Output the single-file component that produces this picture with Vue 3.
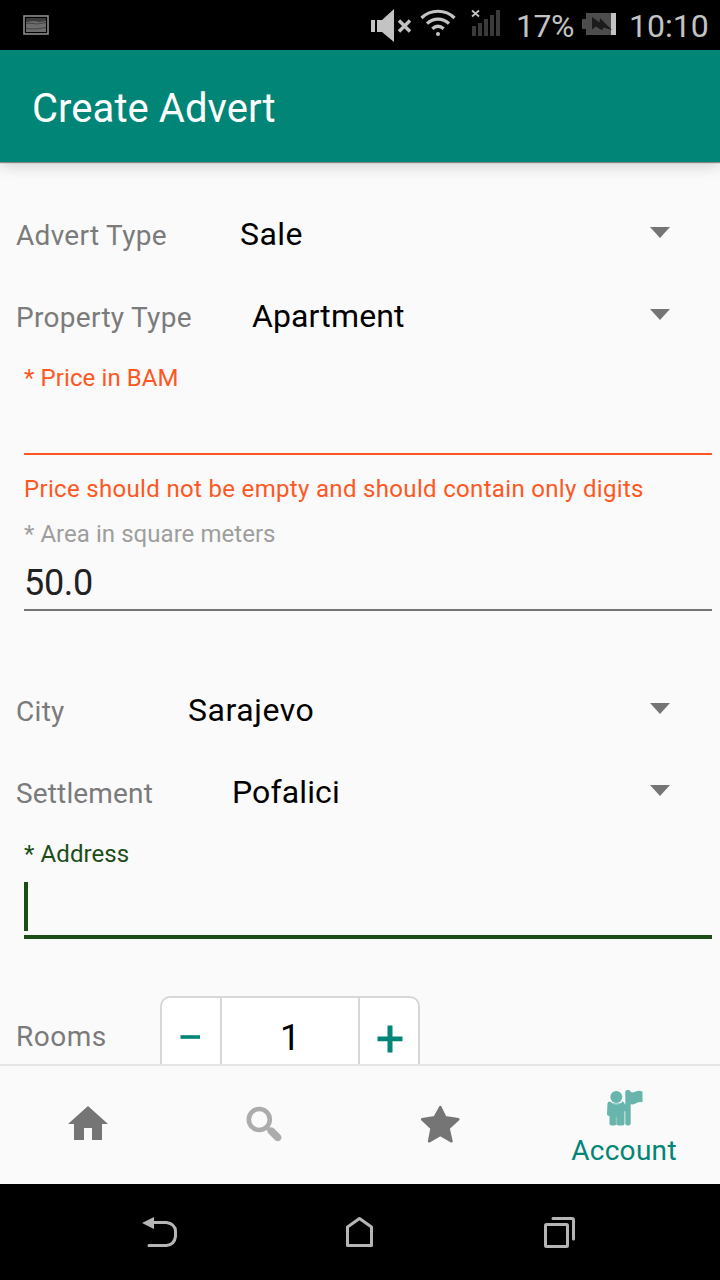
<script setup>
const placeRows = [
  { label: 'Advert Type', value: 'Sale', gap: 'g-sale' },
  { label: 'Property Type', value: 'Apartment', gap: 'g-apartment' },
]
const cityRows = [
  { label: 'City', value: 'Sarajevo', gap: 'g-city' },
  { label: 'Settlement', value: 'Pofalici', gap: 'g-settlement' },
]
</script>

<template>
  <div class="screen">
    <div class="status">
      <svg class="picture" width="26" height="20" viewBox="0 0 26 20">
        <rect x="1" y="1" width="24" height="18" fill="none" stroke="#8d8d8d" stroke-width="1.600" />
        <rect x="3" y="3" width="20" height="14" fill="#6c6c6c" />
        <path d="M3 3h20v3l-7 1-5-1-8 1z" fill="#3c3c3c" />
        <path d="M3 8l7 .500 4 .500 9-1.500M3 13.500l8 .500 6-.500 6-1" fill="none" stroke="#444" />
      </svg>
      <svg class="signals" width="132" height="36" viewBox="370 8 132 36">
        <path d="M371 20h4v12h-4zM377 20h5l12-11v33l-12-10h-5z" fill="#c3c3c3" />
        <path d="M399 20.500l11 11M410 20.500l-11 11" stroke="#c3c3c3" stroke-width="3.400" fill="none" />
        <g fill="none" stroke="#c3c3c3" stroke-width="3.200">
          <path d="M421.500 18c9-9 24-9 33 0" />
          <path d="M427 23.700c6.500-6.200 15.500-6.200 22 0" />
          <path d="M432.300 28.800c3.700-3.300 7.700-3.300 11.400 0" />
        </g>
        <circle cx="438" cy="34" r="2" fill="#c3c3c3" />
        <path d="M472 10.500l7 6M479 10.500l-7 6" stroke="#c3c3c3" stroke-width="1.800" />
        <path d="M472 26h4v10h-4zM478 23h4v13h-4zM484 19h4v17h-4zM490 15h4v21h-4zM496 10h4v26h-4z" fill="#3a3a3a" />
      </svg>
      <span class="percent">17%</span>
      <svg class="battery" width="34" height="22" viewBox="0 0 34 22">
        <path d="M0 6h4V0h25v22H4v-6H0z" fill="#4d4d4d" />
        <path d="M29 0h5v22h-5z" fill="#c3c3c3" />
        <path d="M10 4l7.500 5.500L18 5l12 12-9-2.500-.500 3-6.500-4-4 3z" fill="#1b1b1b" />
      </svg>
      <span class="clock">10:10</span>
    </div>

    <header class="appbar"><h1>Create Advert</h1></header>

    <main class="form">
      <div v-for="row in placeRows" :key="row.label" class="row" :class="row.gap">
        <span class="label">{{ row.label }}</span>
        <span class="value">{{ row.value }}</span>
        <svg class="arrow" width="20" height="11" viewBox="0 0 20 11"><path d="M0 0h20L10 11z" fill="#757575" /></svg>
      </div>

      <div class="field price">
        <span class="hint price-hint">* Price in BAM</span>
        <div class="input"></div>
      </div>
      <span class="error">Price should not be empty and should contain only digits</span>

      <div class="field area">
        <span class="hint area-hint">* Area in square meters</span>
        <div class="input"><span class="number">50.0</span></div>
      </div>

      <div v-for="row in cityRows" :key="row.label" class="row" :class="row.gap">
        <span class="label">{{ row.label }}</span>
        <span class="value">{{ row.value }}</span>
        <svg class="arrow" width="20" height="11" viewBox="0 0 20 11"><path d="M0 0h20L10 11z" fill="#757575" /></svg>
      </div>

      <div class="field address">
        <span class="hint address-hint">* Address</span>
        <div class="input"><i class="caret"></i></div>
      </div>

      <div class="rooms">
        <span class="label">Rooms</span>
        <div class="stepper">
          <div class="step minus">
            <svg width="20" height="4" viewBox="0 0 20 4"><path d="M.500 .200h19.500v3.600H.500z" fill="#018577" /></svg>
          </div>
          <div class="count">1</div>
          <div class="step plus">
            <svg width="26" height="28" viewBox="0 0 26 28"><path d="M.500 11.500h10V.500h5v11h10v4.800h-10V27.500h-5V16.300H.500z" fill="#018577" /></svg>
          </div>
        </div>
      </div>
    </main>

    <nav class="tabs">
      <div class="tab">
        <svg width="40" height="40" viewBox="68 1104 40 40"><path d="M88 1106l20 18h-6v16H92v-12h-8v12H74v-16h-6z" fill="#757575" /></svg>
      </div>
      <div class="tab">
        <svg width="40" height="40" viewBox="244 1104 40 40">
          <circle cx="259.300" cy="1119.500" r="10.500" fill="none" stroke="#acacac" stroke-width="4.600" />
          <path d="M267 1130q0-2 3-2.800 3 0 4 1.200l6.500 6.500q2 2.500 0 5-2.500 2.200-5 0.500l-7-7q-1.500-1.500-1.500-3.400z" fill="#acacac" />
          <path d="M265.500 1125.500l4 4" stroke="#acacac" stroke-width="2.500" />
        </svg>
      </div>
      <div class="tab">
        <svg width="40" height="40" viewBox="420 1104 40 40">
          <path d="M440.300 1107l5 10.300 13 2-9.800 9 3 13-11.200-6.300-11.200 6.300 2.500-13-9.500-9 12.500-2z" fill="#757575" stroke="#757575" stroke-width="2.500" stroke-linejoin="round" />
        </svg>
      </div>
      <div class="tab active">
        <svg width="40" height="40" viewBox="604 1088 40 40">
          <g fill="#67b5ac">
            <circle cx="616.300" cy="1097" r="6" />
            <path d="M610 1101.500q2 1.500 3.500 2h6q2-.500 3.500-2 2.500 3.500 3 8l-1.500 2v12q0 2-2 2h-4l-2-1-2 1h-3q-2 0-2-2v-7.500q-2.500 0-2.500-2.500l.500-10q0-2 2.500-2z" />
            <rect x="625.300" y="1090" width="5.400" height="35.500" rx="2.200" />
            <path d="M630 1091.500q2.500 2 5.500 0 3.500-1.500 7 .300v10.500q-3-1-6 .800-3 2.200-6.500 1zM622 1101q4 3.500 5 6v5q-3-1-4-4z" />
          </g>
          <path d="M612 1103.300q4.300 2.200 8.600 0M616.300 1117v7.500" stroke="#9ccfc9" stroke-width="1" fill="none" />
        </svg>
        <span>Account</span>
      </div>
    </nav>

    <div class="system">
      <svg width="720" height="96" viewBox="0 1184 720 96">
        <g fill="none" stroke="#b5b5b5" stroke-width="3" stroke-linecap="round" stroke-linejoin="round">
          <path d="M153 1222.500h13.500q9 1.500 9 9v5q-1 8-9 9H149" />
          <path d="M359.500 1218.500l12 8.500v18.500h-24V1227z" />
          <rect x="545.500" y="1224.500" width="22" height="22" rx="1" />
          <path d="M553 1218.500h19q1.500 0 1.500 1.500v19" />
        </g>
        <path d="M142 1223l12-6v12z" fill="#b5b5b5" />
      </svg>
    </div>
  </div>
</template>

<style>
body { margin: 0; background: #000; }
</style>

<style scoped>
.screen {
  width: 720px; height: 1280px; overflow: hidden;
  display: flex; flex-direction: column;
  background: #fafafa; font-family: Roboto, "Liberation Sans", sans-serif;
  white-space: nowrap;
}
.status {
  height: 50px; flex: none; background: #000; color: #c3c3c3;
  display: flex; align-items: flex-start; font-size: 32px; line-height: 52px;
}
.picture { margin: 15px 0 0 23px; }
.signals { margin: 8px 0 0 321px; }
.percent { width: 66px; margin-left: 14px; letter-spacing: -.5px; }
.battery { margin: 13px 0 0 0; }
.clock { margin-left: 13px; }
.appbar {
  height: 112px; flex: none; background: #018577; position: relative; z-index: 1;
  display: flex; align-items: flex-start;
  box-shadow: 0 1px 1px rgba(0,0,0,.4), 0 4px 14px rgba(0,0,0,.16);
}
h1 { margin: 36px 0 0 32px; font-size: 40px; line-height: 46px; font-weight: 400; color: #fff; letter-spacing: .05px; }
.form { height: 869px; padding-top: 33px; flex: none; overflow: hidden; display: flex; flex-direction: column; }
.row { height: 82px; flex: none; display: flex; align-items: flex-start; padding-left: 16px; }
.label { font-size: 28px; line-height: 32px; margin-top: 25px; color: #7b7b7b; flex: none; letter-spacing: .3px; }
.value { font-size: 32px; line-height: 38px; margin-top: 20px; color: #000; flex: 1; letter-spacing: .12px; }
.arrow { margin: 32px 50px 0 0; }
.g-sale .label { width: 224px; }
.g-sale .value { letter-spacing: .4px; }
.g-apartment .label { width: 236px; }
.g-city .label { width: 172px; }
.g-city .value { letter-spacing: .55px; }
.g-settlement .label { width: 216px; letter-spacing: .15px; }
.hint, .error { display: block; font-size: 24px; line-height: 28px; letter-spacing: .1px; }
.area-hint { letter-spacing: .05px; }
.field { margin: 5px 8px 0 24px; flex: none; }
.input { box-sizing: border-box; }
.price { color: #ff5722; }
.price .input { height: 63px; border-bottom: 2px solid #ff5722; }
.error { margin: 20px 0 0 24px; color: #ff5722; letter-spacing: .325px; }
.area { margin-top: 17px; margin-bottom: 60px; color: #9e9e9e; }
.area .input { height: 63px; padding-top: 14px; border-bottom: 2px solid #757575; }
.number { display: block; font-size: 36px; line-height: 42px; color: #212121; letter-spacing: -.3px; }
.address { color: #1b4d17; }
.address .input { height: 71px; padding-top: 14px; border-bottom: 4px solid #1b4d17; }
.caret { display: block; width: 4px; height: 49px; background: #1b4d17; }
.rooms { margin: 57px 0 0 16px; display: flex; flex: none; }
.rooms .label { width: 144px; letter-spacing: .5px; }
.stepper {
  box-sizing: border-box; width: 260px; height: 84px; display: flex;
  border: 2px solid #d7d7d7; border-radius: 10px; background: #fff; overflow: hidden;
}
.step { width: 58px; display: flex; align-items: flex-start; justify-content: center; padding-top: 37px; box-sizing: border-box; }
.minus svg { margin-right: 2px; }
.plus { padding-top: 27px; }
.plus svg { margin-left: 2px; }
.count {
  box-sizing: border-box; width: 140px; border: solid #d7d7d7; border-width: 0 2px;
  text-align: center; font-size: 36px; line-height: 80px; color: #000;
}
.tabs {
  height: 120px; flex: none; box-sizing: border-box; border-top: 2px solid #e5e5e5; background: #fafafa;
  display: grid; grid-template-columns: 176px 176px 176px 192px; position: relative; z-index: 1;
}
.tab { display: flex; flex-direction: column; align-items: center; padding-top: 38px; }
.active { padding-top: 22px; color: #018577; font-size: 28px; line-height: 34px; letter-spacing: .3px; }
.active span { margin-top: 6px; }
.system { height: 96px; flex: none; background: #000; }
.system svg { display: block; }
</style>
